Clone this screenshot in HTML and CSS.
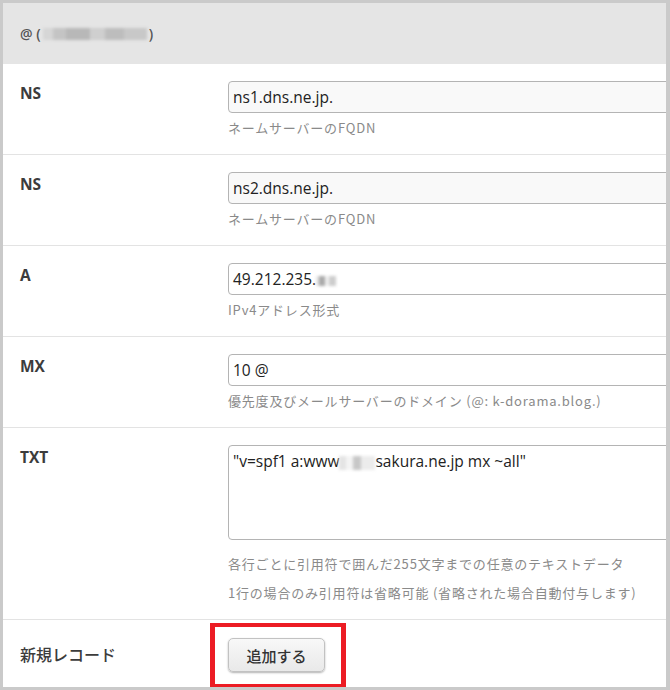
FILE: index.html
```html
<!DOCTYPE html>
<html lang="ja">
<head>
<meta charset="utf-8">
<title>DNS records</title>
<link rel="stylesheet" href="styles.css">
</head>
<body>
<div class="frame">
  <div class="panel-head">@ (<span class="blur blur-head"></span>)</div>

  <div class="row">
    <div class="label">NS</div>
    <div class="cell">
      <input class="field field-ro" type="text" value="ns1.dns.ne.jp." readonly>
      <p class="help">ネームサーバーのFQDN</p>
    </div>
  </div>

  <div class="row">
    <div class="label">NS</div>
    <div class="cell">
      <input class="field field-ro" type="text" value="ns2.dns.ne.jp." readonly>
      <p class="help">ネームサーバーのFQDN</p>
    </div>
  </div>

  <div class="row">
    <div class="label">A</div>
    <div class="cell">
      <div class="field">49.212.235.<span class="blur blur-ip"></span></div>
      <p class="help">IPv4アドレス形式</p>
    </div>
  </div>

  <div class="row">
    <div class="label">MX</div>
    <div class="cell">
      <input class="field" type="text" value="10 @">
      <p class="help">優先度及びメールサーバーのドメイン (@: k-dorama.blog.)</p>
    </div>
  </div>

  <div class="row row-txt">
    <div class="label">TXT</div>
    <div class="cell">
      <div class="field field-area">"v=spf1 a:www<span class="blur blur-txt"></span>sakura.ne.jp mx ~all"</div>
      <div class="help-group">
        <p class="help">各行ごとに引用符で囲んだ255文字までの任意のテキストデータ</p>
        <p class="help">1行の場合のみ引用符は省略可能 (省略された場合自動付与します)</p>
      </div>
    </div>
  </div>

  <div class="row row-new">
    <div class="label label-new">新規レコード</div>
    <div class="cell cell-btn">
      <button class="btn" type="button">追加する</button>
      <span class="highlight"></span>
    </div>
  </div>
</div>
</body>
</html>
```

FILE: styles.css
```css
* { box-sizing: border-box; }

html, body {
  margin: 0;
  padding: 0;
  background: #ffffff;
}

body {
  font-family: "Open Sans", "Noto Sans", "Noto Sans CJK JP", sans-serif;
  color: #333;
}

.frame {
  width: 670px;
  height: 690px;
  border: 3px solid #cacaca;
  border-right-width: 4px;
  overflow: hidden;
  background: #fff;
}

.panel-head {
  height: 61px;
  background: #e5e5e5;
  display: flex;
  align-items: center;
  padding-left: 17px;
  font-size: 14px;
  color: #555;
  font-weight: 600;
}

.blur {
  display: inline-block;
  vertical-align: middle;
  filter: blur(1.6px);
}

.blur-head {
  width: 104px;
  height: 12px;
  margin: 0 2px;
  background: linear-gradient(90deg, #d6d6d6 0 10%, #c4c4c4 10% 22%, #b8b8b8 22% 45%, #cfcfcf 45% 60%, #bdbdbd 60% 78%, #c8c8c8 78% 100%);
}

.blur-ip {
  width: 20px;
  height: 10px;
  background: linear-gradient(90deg, #e6e6e6 0 15%, #a9a9a9 15% 45%, #f0f0f0 45% 65%, #cdcdcd 65% 100%);
}

.blur-txt {
  width: 36px;
  height: 14px;
  background: linear-gradient(90deg, #e4e4e4 0 20%, #f4f4f4 20% 40%, #c7c7c7 40% 60%, #ececec 60% 100%);
}

.row {
  display: grid;
  grid-template-columns: 225px 1fr;
  border-bottom: 1px solid #e3e3e3;
}

.label {
  padding: 19px 0 0 17px;
  font-size: 15.5px;
  line-height: 20px;
  font-weight: 700;
  color: #3c3c3c;
}

.cell {
  padding: 17px 0 16px 0;
  min-width: 0;
}

.field {
  display: block;
  width: 470px;
  height: 32px;
  margin: 0;
  padding: 0 4px;
  border: 1px solid #b4b4b4;
  border-radius: 4px;
  background: #fff;
  font-family: "Open Sans", "Noto Sans", sans-serif;
  font-size: 15.5px;
  line-height: 30px;
  color: #222;
  outline: none;
}

.field-ro {
  background: #f9f9f9;
}

.field-area {
  height: 95px;
  padding-top: 2px;
  line-height: 26px;
}

.help {
  margin: 5px 0 0;
  font-family: "Noto Sans CJK JP", "Noto Sans", sans-serif;
  font-size: 13px;
  letter-spacing: 0.8px;
  line-height: 20px;
  color: #8a8a8a;
  white-space: nowrap;
}

.row-txt .cell {
  padding-bottom: 12px;
}

.help-group {
  margin-top: 9px;
}

.help-group .help {
  margin: 0;
  line-height: 29px;
}

.row-new {
  border-bottom: none;
  height: 67px;
}

.label-new {
  padding-top: 24px;
  font-size: 16px;
  font-weight: 500;
  font-family: "Noto Sans CJK JP", sans-serif;
}

.cell-btn {
  position: relative;
  padding-top: 18px;
}

.btn {
  display: block;
  width: 97px;
  height: 34px;
  padding: 0;
  border: 1px solid #c2c2c2;
  border-radius: 5px;
  background: linear-gradient(#f8f8f8, #e9e9e9);
  box-shadow: 0 1px 2px rgba(0, 0, 0, 0.3);
  font-family: "Noto Sans CJK JP", sans-serif;
  font-size: 15px;
  font-weight: 500;
  color: #333;
}

.highlight {
  position: absolute;
  left: -18px;
  top: 3px;
  width: 136px;
  height: 66px;
  border: 5px solid #ec1c24;
  border-top-width: 4px;
  pointer-events: none;
}
```
